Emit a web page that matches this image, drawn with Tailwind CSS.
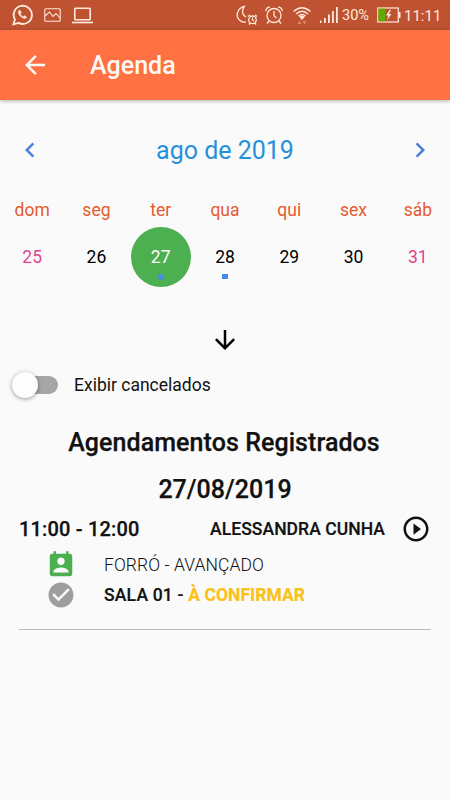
<!DOCTYPE html>
<html lang="pt-BR">
<head>
<meta charset="utf-8">
<title>Agenda</title>
<script src="https://cdn.jsdelivr.net/npm/@tailwindcss/browser@4"></script>
</head>
<body class="w-[450px] h-[800px] overflow-hidden bg-[#fafafa] font-[Roboto,sans-serif] text-[#111]">
<div class="h-[30px] bg-[#bf5230] text-[#ffe9dc] flex items-center pl-[12px] pr-[10px]">
  <svg class="w-[21px] h-[22px]" viewBox="0 0 21 22" fill="none" stroke="currentColor" stroke-width="1.9"><path d="M1.5 20.3 2.9 15.4A9.1 9.1 0 1 1 6.5 18.9Z"/><path d="M7.2 6.2c-2.2 2.3.2 5.300 2.200 6.900 2.300 1.800 4.300 2 5.400.1l-2.100-1.500-1.300 1.100c-1.500-.6-2.500-1.700-3.100-2.900l1-1.200-1-2.300z" fill="currentColor" stroke-width=".5"/></svg>
  <svg class="w-[17px] h-[14px] ml-[11px]" viewBox="0 0 17 14" fill="none" stroke="currentColor" stroke-width="1.1"><rect x=".8" y=".8" width="15.400" height="12.400" rx="1"/><path d="M1 8 5.500 4 9 8.500 12 5.500 16 10"/></svg>
  <svg class="w-[21px] h-[17px] ml-[11px]" viewBox="0 0 21 17" fill="none" stroke="currentColor" stroke-width="1.600"><rect x="2.800" y="1.200" width="15.400" height="11.600" rx=".8"/><path d="M0 15.500H21" stroke-width="1.700"/></svg>
  <svg class="w-[22px] h-[22px] ml-auto" viewBox="0 0 22 22" fill="none" stroke="currentColor" stroke-width="1.300"><path d="M10 18.200C3 18.500-.5 12.500 2 7.500 3.300 4.500 5.500 3 8.300 2.300 4.800 8 7 11.500 10.200 13"/><circle cx="16.500" cy="15.800" r="3.800"/><path d="M16.500 13.500v2.500l1.500 1M12 12.500l2-1.500M19 11l2 1.500M14 19.200l-1.200 1.300M19 19.200l1.200 1.300"/></svg>
  <svg class="w-[18px] h-[19px] ml-[7px]" viewBox="0 0 18 19" fill="none" stroke="currentColor" stroke-width="1.300"><circle cx="9" cy="9.500" r="7"/><path d="M9 5v5l2.500 2M1 5.200C.5 3 2.500 1 5 1.200M17 5.200C17.500 3 15.500 1 13 1.200M4 15l-2 2.500M14 15l2 2.500"/></svg>
  <svg class="w-[20px] h-[20px] ml-[9px]" viewBox="0 0 20 20" fill="none" stroke="currentColor" stroke-width="1.500"><path d="M1.500 6.500Q10-1 18.500 6.500M4 9Q10 3.500 16 9M6.500 11Q10 8 13.500 11"/><path d="M7 11.500Q10 9.500 13 11.500L10 15z" fill="currentColor" stroke="none"/><path d="m5.500 19 2-3.500 2 3.500zM10.500 16h4l-2 3.500z" fill="#e28263" stroke="none"/></svg>
  <svg class="w-[19px] h-[16px] ml-[7px]" viewBox="0 0 19 16" fill="currentColor"><path d="M1 13.500h1.500V16H1zM5 11h1.800v5H5zM9 7.500h1.800V16H9zM13 4h1.800v12H13zM17 0h1.800v16H17z"/></svg>
  <span class="text-[14.500px] ml-[4px] mt-[2px] w-[28px] whitespace-nowrap leading-5">30%</span>
  <svg class="w-[24px] h-[16px] ml-[7px]" viewBox="0 0 24 16" fill="none" stroke="currentColor" stroke-width="1.200"><rect x=".8" y="1" width="20.500" height="14"/><path d="M22.600 5v6" stroke-width="1.800"/><path d="M1.500 1.700h6.500v12.600H1.500z" fill="#5cae00" stroke="none"/><path d="m12.500 3-3.500 5.500h2.300L10 13l4.500-6h-2.700L14 3z" fill="currentColor" stroke="none"/></svg>
  <span class="text-[15px] ml-[3px] mt-px w-[36px] whitespace-nowrap leading-5">11:11</span>
</div>
<header class="h-[70px] bg-[#ff7043] text-[#fffaf5] flex items-center pl-[20px] shadow-[0_1px_4px_rgba(0,0,0,.3)]">
  <svg class="w-[30px] h-[30px]" viewBox="0 0 24 24" fill="currentColor"><path d="M20 11H7.830l5.590-5.590L12 4l-8 8 8 8 1.410-1.410L7.830 13H20v-2z"/></svg>
  <h1 class="ml-[40px] text-[25px] font-medium leading-[30px] mt-[2px]">Agenda</h1>
</header>
<main>
  <div class="h-[100px] flex items-center justify-between px-[15px]">
    <svg class="w-[30px] h-[30px] text-[#4b80dc]" viewBox="0 0 24 24" fill="currentColor"><path d="M15.410 7.410 14 6l-6 6 6 6 1.410-1.410L10.830 12z"/></svg>
    <h2 class="pt-[2px] text-[25px] leading-[30px] text-[#2691da]">ago de 2019</h2>
    <svg class="w-[30px] h-[30px] text-[#4b80dc]" viewBox="0 0 24 24" fill="currentColor"><path d="M10 6 8.590 7.410 13.170 12l-4.580 4.590L10 18l6-6z"/></svg>
  </div>
  <div class="grid grid-cols-7 h-[20px] text-center text-[17.500px] leading-[20px] text-[#e45a30]">
    <span>dom</span><span>seg</span><span>ter</span><span>qua</span><span>qui</span><span>sex</span><span>sáb</span>
  </div>
  <div class="grid grid-cols-7 h-[74px] items-center justify-items-center text-[17.500px] leading-[20px] text-black">
    <span class="text-[#e0458b]">25</span><span>26</span>
    <span class="relative w-[60px] h-[60px] rounded-full bg-[#4caf50] text-white flex items-center justify-center">27<i class="absolute left-[27px] top-[47px] w-[6px] h-[6px] rounded-full bg-[#448ee0]"></i></span>
    <span class="relative">28<i class="absolute left-[7px] top-[27px] w-[6px] h-[5px] bg-[#448aee]"></i></span>
    <span>29</span><span>30</span><span class="text-[#e0458b]">31</span>
  </div>
  <div class="mt-[30px] h-[32px] flex items-center justify-center text-black">
    <svg class="w-[30px] h-[30px]" viewBox="0 0 24 24" fill="currentColor"><path d="m20 12-1.410-1.410L13 16.170V4h-2v12.170l-5.580-5.590L4 12l8 8 8-8z"/></svg>
  </div>
  <label class="h-[58px] flex items-center pl-[12px]">
    <span class="relative w-[46px] h-[18px]"><span class="absolute left-[5px] top-0 w-[41px] h-[18px] rounded-full bg-[#a6a6a6]"></span><span class="absolute left-0 -top-[4px] w-[26px] h-[26px] rounded-full bg-[#fdfdfd] shadow-[0_1px_4px_rgba(0,0,0,.4)]"></span></span>
    <span class="ml-[16px] text-[17.500px] leading-[20px]">Exibir cancelados</span>
  </label>
  <h2 class="h-[56px] pt-[2px] flex items-center justify-center text-[25px] font-medium tracking-[0.07px] [-webkit-text-stroke:0.25px]"><span class="mr-[2px]">Agendamentos Registrados</span></h2>
  <h2 class="h-[38px] pt-[2px] flex items-center justify-center text-[25px] font-medium [-webkit-text-stroke:0.25px]">27/08/2019</h2>
  <section class="mx-[19px] h-[122px] border-b border-[#bdbdbd]">
    <div class="h-[42px] flex items-center justify-between">
      <span class="text-[20px] font-medium tracking-[0.18px] [-webkit-text-stroke:0.25px]">11:00 - 12:00</span>
      <div class="flex items-center">
        <span class="text-[17.500px] font-medium tracking-[0.06px] [-webkit-text-stroke:0.2px]">ALESSANDRA CUNHA</span>
        <svg class="w-[30px] h-[30px] ml-[16px]" viewBox="0 0 24 24" fill="currentColor"><path d="M10 16.500l6-4.500-6-4.500v9zM12 2C6.480 2 2 6.480 2 12s4.480 10 10 10 10-4.480 10-10S17.520 2 12 2zm0 18c-4.410 0-8-3.590-8-8s3.590-8 8-8 8 3.590 8 8-3.590 8-8 8z"/></svg>
      </div>
    </div>
    <div class="h-[30px] flex items-center pl-[27px]">
      <svg class="w-[30px] h-[30px] text-[#4caf50]" viewBox="0 0 24 24" fill="currentColor"><path d="M19 3h-1V1h-2v2H8V1H6v2H5c-1.110 0-2 .9-2 2v14c0 1.100.89 2 2 2h14c1.100 0 2-.9 2-2V5c0-1.100-.9-2-2-2zm-7 3c1.660 0 3 1.340 3 3s-1.340 3-3 3-3-1.340-3-3 1.340-3 3-3zm6 12H6v-1c0-2 4-3.100 6-3.100s6 1.100 6 3.100v1z"/></svg>
      <span class="ml-[28px] text-[17.500px] font-light tracking-[0.08px]">FORRÓ - AVANÇADO</span>
    </div>
    <div class="h-[30px] flex items-center pl-[27px]">
      <svg class="w-[30px] h-[30px] text-[#9e9e9e]" viewBox="0 0 24 24" fill="currentColor"><path d="M12 2C6.480 2 2 6.480 2 12s4.480 10 10 10 10-4.480 10-10S17.520 2 12 2zm-2 15-5-5 1.410-1.410L10 14.170l7.590-7.590L19 8l-9 9z"/></svg>
      <span class="ml-[28px] text-[17.500px] font-medium tracking-[0.19px] [-webkit-text-stroke:0.2px] whitespace-pre">SALA 01 - <span class="font-bold tracking-[0.05px] text-[#fbc119]">À CONFIRMAR</span></span>
    </div>
  </section>
</main>
</body>
</html>
